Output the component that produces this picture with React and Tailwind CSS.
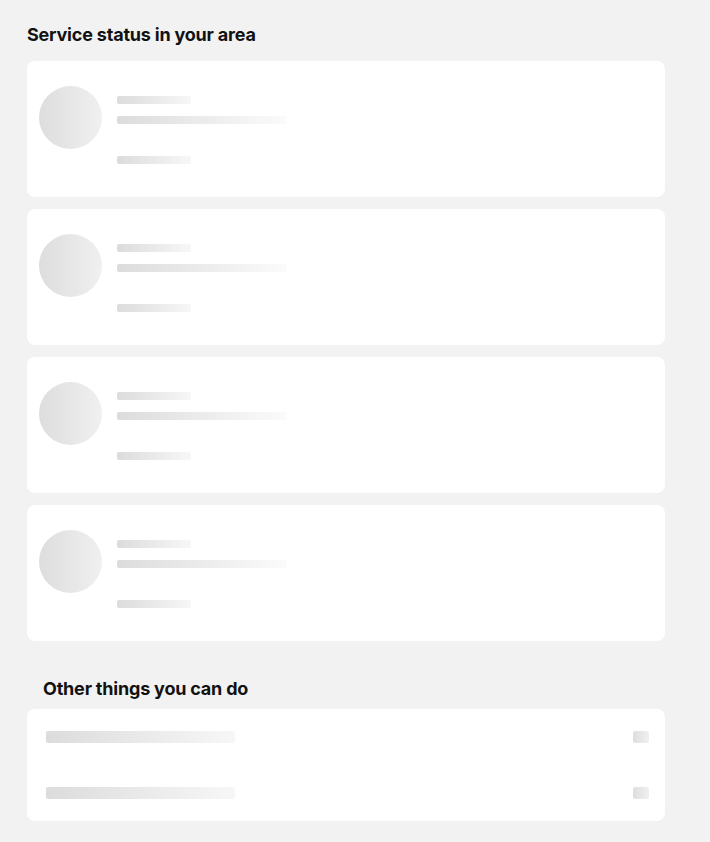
import React from 'react';

const bar = 'bg-[linear-gradient(90deg,#dcdcdc,#f7f7f7)]';

const StatusSkeleton = () => (
  <div className="flex h-[136px] rounded-lg bg-white pl-3 pt-[25px]">
    <div className="h-[63px] w-[63px] shrink-0 rounded-full bg-[linear-gradient(90deg,#dddddd,#f0f0f0)]" />
    <div className="ml-[15px] mt-[10px] flex flex-col">
      <div className={`h-2 w-[74px] rounded-[2px] ${bar}`} />
      <div className="mt-3 h-2 w-[170px] rounded-[2px] bg-[linear-gradient(90deg,#dcdcdc,#fbfbfb)]" />
      <div className={`mt-8 h-2 w-[74px] rounded-[2px] ${bar}`} />
    </div>
  </div>
);

const ActionRow = ({ last }) => (
  <div className={`flex items-center justify-between ${last ? '' : 'mb-[44px]'}`}>
    <div className={`h-3 w-[189px] rounded-[2px] ${bar}`} />
    <div className="h-3 w-4 rounded-[2px] bg-[linear-gradient(90deg,#dedede,#f0f0f0)]" />
  </div>
);

export default function App() {
  return (
    <div className="min-h-[842px] bg-[#f2f2f2] px-[27px] pt-[23px] font-['Inter',sans-serif] text-[#121212]">
      <div className="w-[638px]">
        <h2 className="text-[18px] font-bold leading-6 tracking-[-0.2px]">Service status in your area</h2>
        <div className="mt-[14px] flex flex-col gap-3">
          <StatusSkeleton />
          <StatusSkeleton />
          <StatusSkeleton />
          <StatusSkeleton />
        </div>
        <h2 className="mt-[36px] pl-4 text-[18px] font-bold leading-6 tracking-[-0.2px]">Other things you can do</h2>
        <div className="mt-[8px] rounded-lg bg-white py-[22px] pl-[19px] pr-4">
          <ActionRow />
          <ActionRow last />
        </div>
      </div>
    </div>
  );
}
